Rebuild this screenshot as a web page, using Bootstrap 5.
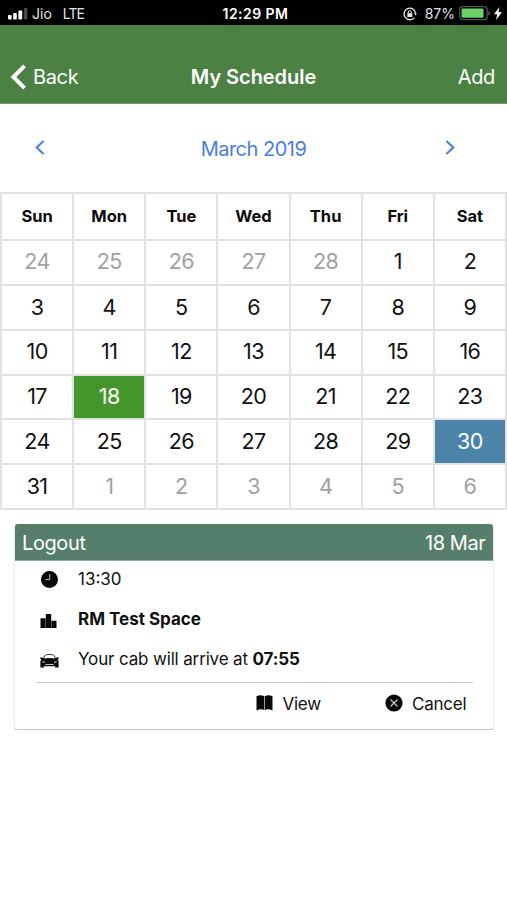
<!DOCTYPE html>
<html lang="en">
<head>
<meta charset="utf-8">
<meta name="viewport" content="width=device-width, initial-scale=1">
<title>My Schedule</title>
<link href="https://cdn.jsdelivr.net/npm/bootstrap@5.3.0/dist/css/bootstrap.min.css" rel="stylesheet">
<style>
body{font-family:Inter,"Liberation Sans",sans-serif;color:#111;background:#fff;line-height:1.2}
svg{display:block;flex:none}
.statusbar{height:25px;background:#000;color:#e4e4e4;font-size:14px;padding-top:3px}
.statusbar .side{flex:1 1 0}
.statusbar .right-side{padding-right:5px}
.carrier{margin-left:4px}
.network{margin-left:11px;letter-spacing:-.9px}
.percent{margin:0 4px 0 8px}
.clock{color:#fff;font-weight:600;font-size:14px;letter-spacing:.45px;padding-left:1px}
.topbar{height:79px;background:#4c8144;border-bottom:1px solid #6f9a69;color:#fff;font-size:20px;padding:25px 12px 0 10px}
.topbar .side{flex:1 1 0;letter-spacing:-.35px}
.topbar a{color:#fff;text-decoration:none}
.topbar h1{font-size:20px;font-weight:600;margin:0;letter-spacing:-.05px;padding-left:2px}
.back{margin-left:6px}
.monthbar{height:88px;color:#4a7de2;font-size:20px;padding:0 52px 0 35px}
.monthbar .month{letter-spacing:-.5px;padding:1px 0 0 17px}
.monthbar button{color:inherit;background:none;border:0;padding:0 0 2px}
.cal{display:grid;grid-template-columns:repeat(7,1fr);grid-template-rows:46.6px 45.6px repeat(5,44.76px);border-top:2px solid #e2e2e2;border-left:2px solid #e2e2e2;height:318px;font-size:21.5px;letter-spacing:-.6px}
.cal>div{display:flex;align-items:center;justify-content:center;border-right:2px solid #e2e2e2;border-bottom:2px solid #e2e2e2}
.cal .dow{font-size:16.5px;font-weight:700;letter-spacing:0;color:#0b0b0b;padding-top:1px}
.cal .out{color:#a0a0a0}
.cal .booked{background:#43962a;color:#fff}
.cal .today{background:#4c84a9;color:#fff}
.trip{margin:14px 14.5px 0 15px;border:0;border-bottom:1px solid #c6c6c6;border-radius:3px;height:206px;box-shadow:0 1px 2px rgba(0,0,0,.3);color:#111}
.trip-head{height:37px;background:#567f6b;color:#fff;font-size:20px;padding:2px 7px 0;border-bottom:1px solid #8fae9e;border-radius:3px 3px 0 0;letter-spacing:-.4px}
.trip-body{padding:0 20px 0 21px;font-size:17px}
.trip-row{padding-left:4px}
.trip-row .ico{width:38px}
.row-time{height:36px}
.row-place{height:44px}
.row-cab{height:37px;margin-bottom:4px;letter-spacing:-.15px}
.drop{margin-top:3px}
.trip-foot{border-top:1px solid #c8c8c8;height:44px;padding-right:6px;letter-spacing:-.2px}
.foot-label{margin-left:9px}
.foot-second{margin-left:64px;margin-top:-3px}
.foot-book{margin-top:-4px}
</style>
</head>
<body>
<header>
  <div class="statusbar d-flex align-items-center">
    <div class="side d-flex align-items-center ps-2">
      <svg width="20" height="13" viewBox="0 0 20 13"><g fill="#fff"><rect y="8" width="3.6" height="4.6" rx="1"/><rect x="5.2" y="6" width="3.6" height="6.6" rx="1"/><rect x="10.4" y="3.5" width="3.8" height="9.1" rx="1"/></g><rect x="15.8" y="1" width="3.6" height="11.6" rx="1" fill="#4a4a4a"/></svg>
      <span class="carrier">Jio</span><span class="network">LTE</span>
    </div>
    <div class="clock">12:29 PM</div>
    <div class="side right-side d-flex align-items-center justify-content-end">
      <svg width="14" height="14" viewBox="0 0 14 14" fill="none" stroke="#e8e8e8" stroke-width="1.3"><path d="M12.6 6A5.8 5.8 0 1 0 11.4 10.6"/><path d="M10.9 6.2h3l-1.4 2.2z" fill="#e8e8e8" stroke="none"/><rect x="4.3" y="6.2" width="5" height="3.8" fill="#e8e8e8" stroke="none"/><path d="M5.3 6.4V5a1.5 1.5 0 0 1 3 0v1.4" stroke-width="1"/></svg>
      <span class="percent">87%</span>
      <svg width="31" height="15" viewBox="0 0 31 15"><rect x=".6" y=".6" width="27.6" height="13" rx="3" fill="none" stroke="#555" stroke-width="1.2"/><rect x="2.5" y="2.4" width="22" height="9.4" rx="1.2" fill="#6bd166"/><path d="M29.4 5v4.6q1.5-.5 1.5-2.3t-1.5-2.3z" fill="#666"/></svg>
      <svg class="ms-1" width="8" height="13" viewBox="0 0 8 13" fill="#fff"><path d="M5.4 0 0 7.2h3.2L2 13l6-7.8H4.4z"/></svg>
    </div>
  </div>
  <nav class="topbar d-flex align-items-center">
    <a class="side d-flex align-items-center" href="#"><svg width="17" height="26" viewBox="0 0 17 26" fill="none" stroke="#fff" stroke-width="4"><path d="M14.6 1.8 3.4 13l11.2 11.2"/></svg><span class="back">Back</span></a>
    <h1>My Schedule</h1>
    <a class="side text-end" href="#">Add</a>
  </nav>
</header>
<main>
  <div class="monthbar d-flex align-items-center justify-content-between">
    <button aria-label="Previous month"><svg width="10" height="15" viewBox="0 0 10 15" fill="none" stroke="currentColor" stroke-width="2.1"><path d="M8.6 1 1.7 7.5l6.9 6.5"/></svg></button>
    <span class="month">March 2019</span>
    <button aria-label="Next month"><svg width="10" height="15" viewBox="0 0 10 15" fill="none" stroke="currentColor" stroke-width="2.1"><path d="m1.4 1 6.9 6.5L1.4 14"/></svg></button>
  </div>
  <div class="cal">
    <div class="dow">Sun</div><div class="dow">Mon</div><div class="dow">Tue</div><div class="dow">Wed</div><div class="dow">Thu</div><div class="dow">Fri</div><div class="dow">Sat</div>
    <div class="out">24</div><div class="out">25</div><div class="out">26</div><div class="out">27</div><div class="out">28</div><div>1</div><div>2</div>
    <div>3</div><div>4</div><div>5</div><div>6</div><div>7</div><div>8</div><div>9</div>
    <div>10</div><div>11</div><div>12</div><div>13</div><div>14</div><div>15</div><div>16</div>
    <div>17</div><div class="booked">18</div><div>19</div><div>20</div><div>21</div><div>22</div><div>23</div>
    <div>24</div><div>25</div><div>26</div><div>27</div><div>28</div><div>29</div><div class="today">30</div>
    <div>31</div><div class="out">1</div><div class="out">2</div><div class="out">3</div><div class="out">4</div><div class="out">5</div><div class="out">6</div>
  </div>
  <section class="card trip">
    <div class="trip-head d-flex align-items-center justify-content-between"><span>Logout</span><span>18 Mar</span></div>
    <div class="trip-body">
      <div class="trip-row row-time d-flex align-items-center"><span class="ico"><svg width="19" height="18" viewBox="0 0 19 18"><circle cx="9.5" cy="9.4" r="8.5" fill="#080808"/><path d="M9.700 4v5.600H5.400" fill="none" stroke="#bbb" stroke-width="1"/></svg></span><span>13:30</span></div>
      <div class="trip-row row-place d-flex align-items-center fw-bold"><span class="ico"><svg class="drop" width="17" height="14" viewBox="0 0 17 14" fill="#080808"><path d="M.5 4.200h5V14h-5zM5.800 0h5.400v14H5.800zM11.500 6.800h5V14h-5z"/></svg></span><span>RM Test Space</span></div>
      <div class="trip-row row-cab d-flex align-items-center"><span class="ico"><svg class="drop" width="19" height="15" viewBox="0 0 19 15"><path d="M3.200 5 4.700 1.900Q5.200.8 6.500.7 9.500.3 12.500.7q1.300.1 1.800 1.200L15.800 5" fill="none" stroke="#333" stroke-width="1"/><path fill="#080808" fill-rule="evenodd" d="M.3 3.600h2.400l.6.8Q9.500 3.600 15.700 4.400l.6-.8h2.400v1.300l-1.300.5 1.200 1.700V13.500h-3.500v-1.200H3.900v1.200H.4V7.100l1.200-1.700-1.300-.5zM2.300 7.300l.2 1 2.800.5-.7-1.100zM16.700 7.300l-2.300.4-.7 1.100 2.800-.5zM5.600 10.200l-.6.9h9l-.6-.9z"/></svg></span><span>Your cab will arrive at <b>07:55</b></span></div>
      <div class="trip-foot d-flex align-items-center justify-content-end">
        <svg class="foot-book" width="17" height="16" viewBox="0 0 17 16" fill="#080808"><path d="M.5 1.200Q4.500-.600 8.200 1.200V15Q4.500 13.300.5 15.500zM8.800 1.200q3.700-1.800 7.700 0v14.300Q12.500 13.300 8.800 15z"/></svg><span class="foot-label">View</span>
        <svg class="foot-second" width="18" height="18" viewBox="0 0 18 18"><circle cx="9" cy="9" r="8.600" fill="#080808"/><path d="m5.500 5.500 7 7m0-7-7 7" stroke="#ccc" stroke-width="1.100"/></svg><span class="foot-label">Cancel</span>
      </div>
    </div>
  </section>
</main>
<script src="https://cdn.jsdelivr.net/npm/bootstrap@5.3.0/dist/js/bootstrap.bundle.min.js"></script>
</body>
</html>
